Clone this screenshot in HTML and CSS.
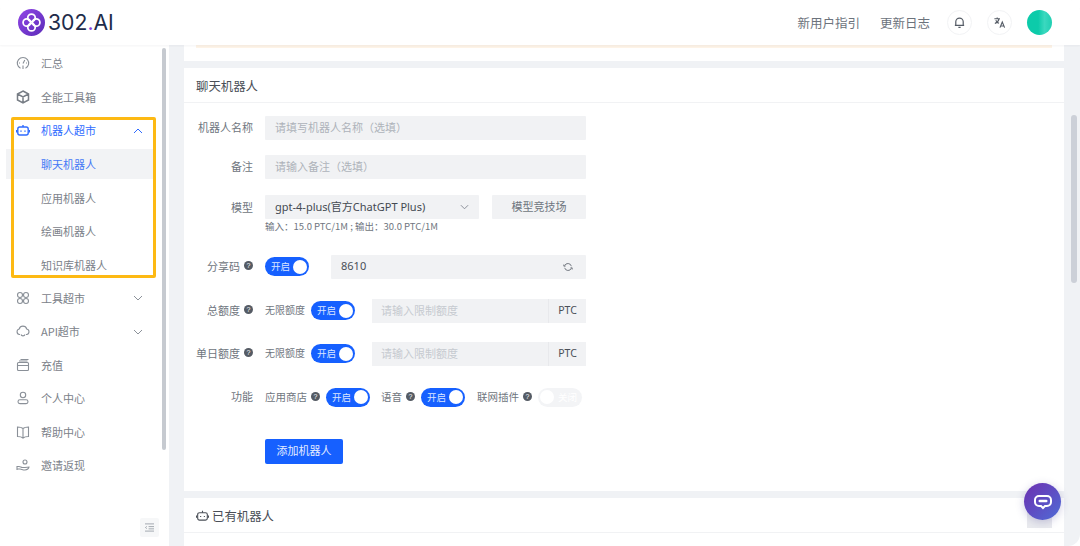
FILE: index.html
```html
<!DOCTYPE html>
<html lang="zh-CN">
<head>
<meta charset="utf-8">
<title>302.AI</title>
<link rel="stylesheet" href="styles.css">
</head>
<body>
<div class="app">
  <header class="topbar">
    <div class="brand">
      <svg class="logo" viewBox="0 0 26 26"><defs><linearGradient id="lg" x1="0" y1="0" x2="1" y2="1"><stop offset="0" stop-color="#9146e6"/><stop offset="1" stop-color="#5b2bb8"/></linearGradient></defs><circle cx="13" cy="13" r="13" fill="url(#lg)"/><g fill="none" stroke="#fff" stroke-width="1.700"><circle cx="13" cy="8.500" r="3.600"/><circle cx="13" cy="17.500" r="3.600"/><circle cx="8.500" cy="13" r="3.600"/><circle cx="17.500" cy="13" r="3.600"/></g></svg>
      <span class="brand-name">302<i>.</i>AI</span>
    </div>
    <nav class="topnav">
      <a>新用户指引</a>
      <a>更新日志</a>
      <span class="round"><svg viewBox="0 0 14 14" width="13" height="13" fill="none" stroke="#555c66" stroke-width="1.300"><path d="M3 10.200V6.300a4 4 0 0 1 8 0v3.900zM2 10.200h10M5.800 12.200h2.400"/></svg></span>
      <span class="round"><svg viewBox="0 0 14 14" width="13" height="13" fill="none" stroke="#555c66" stroke-width="1.200"><path d="M1.500 3h6M4.500 1.500V3M6.500 3c-.5 2.500-2 4-4.500 5M3 4.500c.7 1.600 2 2.800 3.500 3.300M7.500 12.500l2.500-6 2.500 6M8.300 10.800h3.400"/></svg></span>
      <span class="avatar"></span>
    </nav>
  </header>

  <div class="workspace">
    <aside class="sidebar">
      <ul class="menu">
        <li class="item"><svg class="ico" viewBox="0 0 14 14"><path d="M4.500 12.300a5.700 5.700 0 1 1 5 0"/><path d="M7 7.500 8.800 4M7 13V9.500M3 7h1M10 7h1"/></svg>汇总</li>
        <li class="item"><svg class="ico thick" viewBox="0 0 14 14"><path d="M7 1 12.500 4v6L7 13 1.500 10V4zM1.500 4 7 7l5.500-3M7 7v6"/></svg>全能工具箱</li>
        <li class="item open"><svg class="ico" viewBox="0 0 14 14"><rect x="1.800" y="4" width="10.400" height="8" rx="2"/><path d="M7 4V2M0.500 7v2.500M13.500 7v2.500M5 7.500v1.200M9 7.500v1.200"/></svg>机器人超市<svg class="chev" viewBox="0 0 10 6"><path d="M1 5l4-4 4 4"/></svg></li>
        <li class="item sub active">聊天机器人</li>
        <li class="item sub">应用机器人</li>
        <li class="item sub">绘画机器人</li>
        <li class="item sub">知识库机器人</li>
        <li class="item"><svg class="ico" viewBox="0 0 14 14"><circle cx="4" cy="4" r="2.500"/><circle cx="10" cy="4" r="2.500"/><circle cx="4" cy="10" r="2.500"/><circle cx="10" cy="10" r="2.500"/></svg>工具超市<svg class="chev" viewBox="0 0 10 6"><path d="M1 1l4 4 4-4"/></svg></li>
        <li class="item"><svg class="ico" viewBox="0 0 14 14"><path d="M4 10.500H3.500a2.800 2.800 0 0 1-.3-5.500 3.900 3.900 0 0 1 7.500 0 2.800 2.800 0 0 1 0 5.500H10M5 10.500c.5 1.800 3.500 1.800 4 0"/></svg>API超市<svg class="chev" viewBox="0 0 10 6"><path d="M1 1l4 4 4-4"/></svg></li>
        <li class="item"><svg class="ico" viewBox="0 0 14 14"><rect x="1.500" y="4.500" width="11" height="8" rx="1"/><path d="M1.500 7.500h11M3 3h8.500M4.500 1.500h8"/></svg>充值</li>
        <li class="item"><svg class="ico" viewBox="0 0 14 14"><circle cx="7" cy="4" r="2.700"/><rect x="2" y="8.800" width="10" height="3.800" rx="1.900"/></svg>个人中心</li>
        <li class="item"><svg class="ico" viewBox="0 0 14 14"><path d="M7 3.500C5.500 2.200 3.500 2 1.500 2v9.500c2 0 4 .2 5.500 1.500 1.500-1.300 3.500-1.500 5.500-1.500V2c-2 0-4 .2-5.500 1.500zM7 3.500V13"/></svg>帮助中心</li>
        <li class="item"><svg class="ico" viewBox="0 0 14 14"><path d="M1 12V8.500h2c1.500 0 2 1 3.500 1H9L13 9c0 1.500-2 3-4 3-2.500 0-3.500-1-5-1H1"/><circle cx="9" cy="4" r="2"/></svg>邀请返现</li>
      </ul>
      <span class="collapse"><svg viewBox="0 0 12 10" width="11" height="9" fill="none" stroke="#9aa0a8" stroke-width="1"><path d="M1 1h10M5 4h6M5 6.500h6M1 9h10M3 3.800 1.500 5 3 6.200"/></svg></span>
      <span class="side-scroll"></span>
      <span class="callout"></span>
    </aside>

    <main class="content">
      <section class="card card-top"><div class="notice"></div></section>

      <section class="card card-form">
        <h2 class="card-title">聊天机器人</h2>
        <form class="form">
          <div class="row r-name"><label class="lbl">机器人名称</label><span class="field wide ph">请填写机器人名称（选填）</span></div>
          <div class="row r-note"><label class="lbl">备注</label><span class="field wide ph">请输入备注（选填）</span></div>
          <div class="row r-model"><label class="lbl">模型</label>
            <span class="field select">gpt-4-plus(官方ChatGPT Plus)<svg class="sel-chev" viewBox="0 0 10 6"><path d="M1 1l4 4 4-4"/></svg></span>
            <span class="field arena">模型竞技场</span>
          </div>
          <p class="hint">输入：15.0 PTC/1M ; 输出：30.0 PTC/1M</p>
          <div class="row r-share"><label class="lbl">分享码<i class="q">?</i></label>
            <span class="switch">开启</span>
            <span class="field code">8610<svg class="refresh" viewBox="0 0 12 12" width="10" height="10"><path d="M2 4.500A4.200 4.200 0 0 1 10 5M10 7.500A4.200 4.200 0 0 1 2 7M1 3v2h2M11 9V7H9"/></svg></span>
          </div>
          <div class="row r-total"><label class="lbl">总额度<i class="q">?</i></label>
            <span class="opt unl">无限额度</span><span class="switch">开启</span>
            <span class="limit"><span class="limit-in">请输入限制额度</span><span class="unit">PTC</span></span>
          </div>
          <div class="row r-day"><label class="lbl">单日额度<i class="q">?</i></label>
            <span class="opt unl">无限额度</span><span class="switch">开启</span>
            <span class="limit"><span class="limit-in">请输入限制额度</span><span class="unit">PTC</span></span>
          </div>
          <div class="row r-func"><label class="lbl">功能</label>
            <span class="opt">应用商店<i class="q">?</i></span><span class="switch">开启</span>
            <span class="opt o2">语音<i class="q">?</i></span><span class="switch">开启</span>
            <span class="opt o3">联网插件<i class="q">?</i></span><span class="switch off">关闭</span>
          </div>
          <button class="primary" type="button">添加机器人</button>
        </form>
      </section>

      <section class="card card-list">
        <h2 class="card-title"><svg class="title-ico" viewBox="0 0 14 14"><rect x="1.800" y="4" width="10.400" height="8" rx="2"/><path d="M7 4V2M0.500 7v2.500M13.500 7v2.500M5 7.500v1.200M9 7.500v1.200"/></svg>已有机器人</h2>
      </section>
      <span class="page-scroll"></span>
    </main>
  </div>

  <span class="fab-shadow"></span>
  <button class="fab" type="button"><svg viewBox="0 0 20 18" width="20" height="18"><path d="M6 3h8a4 4 0 0 1 4 4v2a4 4 0 0 1-4 4h-2l-2 2-2-2H6a4 4 0 0 1-4-4V7a4 4 0 0 1 4-4z" fill="none" stroke="#fff" stroke-width="2"/><rect x="5.500" y="6.800" width="9" height="2.400" rx="1.200" fill="#fff"/></svg></button>
</div>
</body>
</html>
```
FILE: styles.css
```css
* { box-sizing: border-box; }
html, body { margin: 0; height: 100%; overflow: hidden; }
body { font-family: "Noto Sans CJK SC", "Noto Sans", sans-serif; font-size: 11px; color: #6f7680; background: #fff; }
.app { position: relative; width: 1080px; height: 546px; display: flex; flex-direction: column; overflow: hidden; border-radius: 12px; }

.topbar { height: 45px; flex: none; display: flex; align-items: center; justify-content: space-between; padding: 0 28px 0 18px; background: #fff; position: relative; z-index: 2; box-shadow: 0 1px 2px rgba(30,40,60,.05); }
.brand { display: flex; align-items: center; gap: 3px; }
.logo { width: 27px; height: 27px; }
.brand-name { font-family: Inter, Roboto, sans-serif; font-size: 21.200px; color: #1e2c4a; line-height: 27px; }
.brand-name i { font-style: normal; color: #8a3fe0; }
.topnav { display: flex; align-items: center; font-size: 12.500px; color: #6c737c; }
.topnav a { margin-right: 20px; padding-bottom: 1px; }
.topnav a + a { margin-right: 17px; }
.round { width: 25px; height: 25px; border: 1px solid #f2f3f5; border-radius: 50%; display: flex; align-items: center; justify-content: center; margin-right: 15px; }
.avatar { width: 25px; height: 25px; border-radius: 50%; background: linear-gradient(90deg, #0ccbaa 0 45%, #3bd8bf 70%, #1fcfb2); }

.workspace { flex: 1; display: flex; min-height: 0; }

.sidebar { position: relative; width: 169px; flex: none; background: #fff; padding: 1.500px 14px 0 6px; }
.menu { list-style: none; margin: 0; padding: 0; }
.item { height: 33.500px; display: flex; align-items: center; padding-left: 10px; color: #7b8189; position: relative; }
.ico { width: 14px; height: 14px; margin-right: 11px; fill: none; stroke: #8a9098; stroke-width: 1.100; flex: none; }
.thick { stroke-width: 1.500; stroke: #777d85; }
.chev { position: absolute; right: 12px; top: 14px; width: 10px; height: 6px; fill: none; stroke: #8c929a; stroke-width: 1; }
.open { color: #2f6bff; }
.open .ico { stroke: #2f6bff; stroke-width: 1.400; }
.open .chev { stroke: #2f6bff; }
.sub { padding-left: 35px; padding-top: 1px; }
.active { color: #4579f5; background: #f2f3f5; height: 30px; margin: 2px 0 1.500px; padding-top: 0; }
.collapse { position: absolute; left: 140px; bottom: 9px; width: 19px; height: 19px; background: #f6f7f8; border-radius: 2px; display: flex; align-items: center; justify-content: center; }
.side-scroll { position: absolute; left: 162px; top: 3px; width: 4px; height: 402px; background: #c6cad0; border-radius: 2px; }
.callout { position: absolute; left: 11px; top: 72px; width: 145px; height: 161px; border: 3px solid #fdb913; border-radius: 2px; pointer-events: none; }

.content { position: relative; flex: 1; min-width: 0; background: #f0f2f5; padding: 0 16px 0 15px; overflow: hidden; }
.card { background: #fff; margin-bottom: 7px; }
.card-top { height: 16px; padding: 0 12px; }
.notice { height: 3px; background: #fdf3e7; }
.card-title { margin: 0; height: 35px; display: flex; align-items: center; padding: 1px 0 0 12px; font-size: 12.400px; font-weight: 400; color: #4a4f57; border-bottom: 1px solid #f1f2f4; }
.title-ico { width: 13px; height: 13px; margin-right: 3px; fill: none; stroke: #4a4f57; stroke-width: 1.200; }

.card-form { height: 423px; }
.form { padding: 12.500px 0 0 12px; }
.row { display: flex; align-items: center; }
.lbl { width: 57px; margin-right: 12px; padding-bottom: 2px; text-align: right; display: flex; justify-content: flex-end; align-items: center; flex: none; white-space: nowrap; color: #6f7680; }
.r-model .lbl { padding-bottom: 0; }
.field { height: 24px; background: #f1f2f4; border-radius: 1px; display: flex; align-items: center; padding: 0 0 2px 10px; color: #50555c; }
.wide { width: 321px; }
.ph { color: #aeb3ba; }
.r-note { margin-top: 15.500px; }
.r-model { margin-top: 15.500px; }
.select { width: 214px; position: relative; font-family: "Noto Sans", "Noto Sans CJK SC", sans-serif; font-size: 11px; color: #444a52; }
.sel-chev { position: absolute; right: 10px; top: 9px; width: 9px; height: 6px; fill: none; stroke: #80868e; stroke-width: 1; }
.arena { width: 94px; margin-left: 13px; padding: 0 0 2px; justify-content: center; color: #6f7680; }
.hint { margin: 2px 0 0 69px; height: 11px; line-height: 11px; font-size: 9.500px; color: #6f7680; white-space: nowrap; }
.r-share { margin-top: 23px; }
.r-share .switch { margin-right: 22px; }
.code { width: 255px; position: relative; font-family: "Noto Sans", sans-serif; color: #4a4f57; }
.refresh { position: absolute; right: 13px; top: 7px; fill: none; stroke: #6a7078; stroke-width: 1.100; }
.q { width: 9px; height: 9px; margin-left: 4px; border-radius: 50%; background: #555b64; color: #fff; font-style: normal; font-size: 7px; line-height: 9px; text-align: center; font-family: "Liberation Sans", sans-serif; flex: none; }
.switch { width: 44px; height: 19px; border-radius: 10px; background: #1660ff; color: #dbe6ff; font-size: 9.500px; line-height: 18px; padding-left: 6px; position: relative; flex: none; }
.switch::after { content: ""; position: absolute; right: 2px; top: 2.500px; width: 14px; height: 14px; border-radius: 50%; background: #fff; }
.switch.off { background: #f3f4f6; color: #fff; padding-left: 20px; }
.switch.off::after { left: 2px; right: auto; }
.opt { display: inline-flex; align-items: center; margin-right: 6px; padding-bottom: 2px; font-size: 10.500px; color: #6f7680; white-space: nowrap; flex: none; }
.unl { font-size: 10px; }
.o2 { margin-left: 11px; }
.o3 { margin-left: 12px; }
.limit { display: flex; width: 214px; height: 24px; margin-left: 17px; background: #f1f2f4; }
.limit-in { flex: 1; padding-left: 9px; line-height: 22px; color: #c6cad0; }
.unit { width: 38px; border-left: 1px solid #e8e9ec; text-align: center; line-height: 23px; color: #4a4f57; font-family: "Noto Sans", sans-serif; font-size: 10.500px; }
.r-total { margin-top: 20px; }
.r-day { margin-top: 19px; }
.r-func { margin-top: 22px; }
.primary { display: block; margin: 32px 0 0 69px; width: 78px; height: 25px; border: 0; border-radius: 2px; background: #1660ff; color: #e4ecff; font: inherit; font-size: 11px; padding: 0 0 2px; }

.card-list { height: 60px; }
.page-scroll { position: absolute; left: 902px; top: 70px; width: 6px; height: 168px; background: #ccd0d8; border-radius: 3px; }

.fab-shadow { position: absolute; left: 1027px; top: 500px; width: 25px; height: 28px; background: #e9eaee; }
.fab { position: absolute; left: 1024px; top: 483px; width: 37px; height: 37px; border: 0; border-radius: 50%; padding: 0; display: flex; align-items: center; justify-content: center; background: linear-gradient(135deg, #6d2fb0, #4f6cd6); box-shadow: 0 2px 8px rgba(60,50,140,.25); }
```
